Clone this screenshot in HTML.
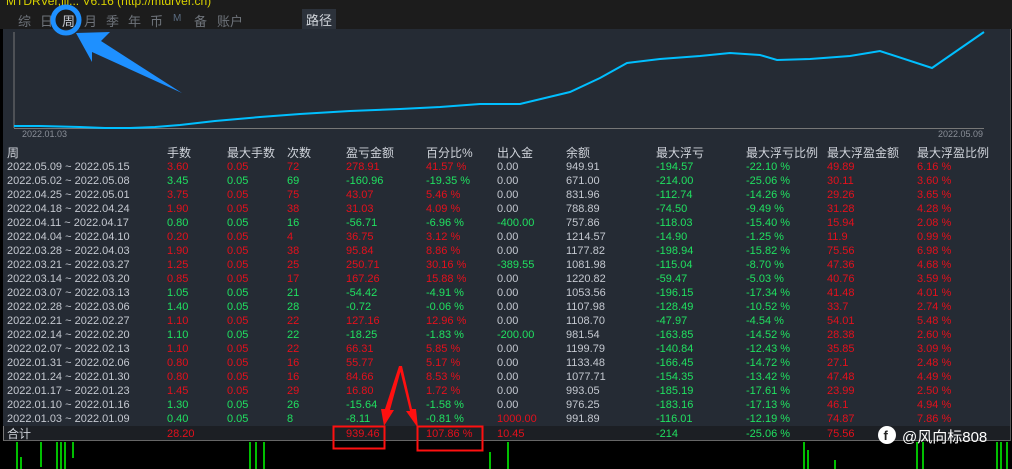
<!DOCTYPE html>
<html><head><meta charset="utf-8">
<style>
*{margin:0;padding:0;box-sizing:border-box}
body{width:1012px;height:469px;overflow:hidden;background:#000;position:relative;font-family:"Liberation Sans","Noto Sans CJK SC",sans-serif;font-size:11px}
.top{position:absolute;left:0;top:0;width:1012px;height:29px;background:#1c1c1c}
.ttl{position:absolute;left:6px;top:-6px;color:#d8d000;font-size:12px}
.tabs{position:absolute;left:18px;top:11px;color:#6e737a;font-size:13px;letter-spacing:0}
.tabs span{position:absolute;white-space:nowrap}
.chart{position:absolute;left:3px;top:29px;width:1007px;height:113px;background:#252b34}
.tbl{position:absolute;left:3px;top:142px;width:1007px;height:284px;background:#252b34}
.tot{position:absolute;left:3px;top:426px;width:1007px;height:15px;background:#1c1f24;border-left:1px solid #777;border-bottom:1px solid #666}
.r{position:absolute;left:0;width:1012px;height:14px;line-height:14px;white-space:nowrap}
.r span{position:absolute;top:0}
.h{color:#cfd3da;font-size:12px}
.c0{left:7px}.c1{left:167px}.c2{left:227px}.c3{left:287px}.c4{left:346px}.c5{left:426px}.c6{left:497px}.c7{left:566px}.c8{left:656px}.c9{left:746px}.c10{left:827px}.c11{left:917px}
.d{color:#c4c8d0}.R{color:#e4101c}.G{color:#20e060}.W{color:#c4c8d0}
</style></head><body>
<div class="top">
<div class="ttl">MTDRVer,ljl... V6.16 (http://mtdrver.cn)</div>
<div class="tabs">
<span style="left:0">综</span><span style="left:22px">日</span><span style="left:44px;color:#c8ccd4">周</span><span style="left:66px">月</span><span style="left:88px">季</span><span style="left:110px">年</span><span style="left:132px">币</span><span style="left:155px;font-size:10px;top:2px;color:#5a6b80">M</span><span style="left:176px">备</span><span style="left:199px">账户</span>
<span style="left:284px;top:-2px;background:#2c323b;color:#d0d4da;padding:1px 4px;font-size:13px">路径</span>
</div>
</div>
<div class="chart"></div>
<svg style="position:absolute;left:0;top:0" width="1012" height="160">
<line x1="14" y1="32" x2="14" y2="128" stroke="#777" stroke-width="1"/>
<line x1="14" y1="128.5" x2="984" y2="128.5" stroke="#777" stroke-width="1"/>
<polyline fill="none" stroke="#00bfff" stroke-width="2" points="14,126 40,126 80,127 105,128 130,128 155,127 180,125 215,121 260,117 300,114 350,111 400,109 440,107 480,104 520,104 570,92 600,78 627,63 660,59 700,56 720,54 730,53 760,55 777,60 810,59 850,56 880,51 932,68 984,32"/>
<text x="22" y="137" fill="#8a8f98" font-size="9" font-family="Liberation Sans">2022.01.03</text>
<text x="938" y="137" fill="#8a8f98" font-size="9" font-family="Liberation Sans">2022.05.09</text>
</svg>
<div class="tbl"></div>
<div class="tot"></div>
<div class="r h" style="top:146px"><span class="c0">周</span><span class="c1">手数</span><span class="c2">最大手数</span><span class="c3">次数</span><span class="c4">盈亏金额</span><span class="c5">百分比%</span><span class="c6">出入金</span><span class="c7">余额</span><span class="c8">最大浮亏</span><span class="c9">最大浮亏比例</span><span class="c10">最大浮盈金额</span><span class="c11">最大浮盈比例</span></div>
<div class="r" style="top:160px"><span class="c0 d">2022.05.09 ~ 2022.05.15</span><span class="c1 R">3.60</span><span class="c2 R">0.05</span><span class="c3 R">72</span><span class="c4 R">278.91</span><span class="c5 R">41.57 %</span><span class="c6 W">0.00</span><span class="c7 W">949.91</span><span class="c8 G">-194.57</span><span class="c9 G">-22.10 %</span><span class="c10 R">49.89</span><span class="c11 R">6.16 %</span></div>
<div class="r" style="top:174px"><span class="c0 d">2022.05.02 ~ 2022.05.08</span><span class="c1 G">3.45</span><span class="c2 G">0.05</span><span class="c3 G">69</span><span class="c4 G">-160.96</span><span class="c5 G">-19.35 %</span><span class="c6 W">0.00</span><span class="c7 W">671.00</span><span class="c8 G">-214.00</span><span class="c9 G">-25.06 %</span><span class="c10 R">30.11</span><span class="c11 R">3.60 %</span></div>
<div class="r" style="top:188px"><span class="c0 d">2022.04.25 ~ 2022.05.01</span><span class="c1 R">3.75</span><span class="c2 R">0.05</span><span class="c3 R">75</span><span class="c4 R">43.07</span><span class="c5 R">5.46 %</span><span class="c6 W">0.00</span><span class="c7 W">831.96</span><span class="c8 G">-112.74</span><span class="c9 G">-14.26 %</span><span class="c10 R">29.26</span><span class="c11 R">3.65 %</span></div>
<div class="r" style="top:202px"><span class="c0 d">2022.04.18 ~ 2022.04.24</span><span class="c1 R">1.90</span><span class="c2 R">0.05</span><span class="c3 R">38</span><span class="c4 R">31.03</span><span class="c5 R">4.09 %</span><span class="c6 W">0.00</span><span class="c7 W">788.89</span><span class="c8 G">-74.50</span><span class="c9 G">-9.49 %</span><span class="c10 R">31.28</span><span class="c11 R">4.28 %</span></div>
<div class="r" style="top:216px"><span class="c0 d">2022.04.11 ~ 2022.04.17</span><span class="c1 G">0.80</span><span class="c2 G">0.05</span><span class="c3 G">16</span><span class="c4 G">-56.71</span><span class="c5 G">-6.96 %</span><span class="c6 G">-400.00</span><span class="c7 W">757.86</span><span class="c8 G">-118.03</span><span class="c9 G">-15.40 %</span><span class="c10 R">15.94</span><span class="c11 R">2.08 %</span></div>
<div class="r" style="top:230px"><span class="c0 d">2022.04.04 ~ 2022.04.10</span><span class="c1 R">0.20</span><span class="c2 R">0.05</span><span class="c3 R">4</span><span class="c4 R">36.75</span><span class="c5 R">3.12 %</span><span class="c6 W">0.00</span><span class="c7 W">1214.57</span><span class="c8 G">-14.90</span><span class="c9 G">-1.25 %</span><span class="c10 R">11.9</span><span class="c11 R">0.99 %</span></div>
<div class="r" style="top:244px"><span class="c0 d">2022.03.28 ~ 2022.04.03</span><span class="c1 R">1.90</span><span class="c2 R">0.05</span><span class="c3 R">38</span><span class="c4 R">95.84</span><span class="c5 R">8.86 %</span><span class="c6 W">0.00</span><span class="c7 W">1177.82</span><span class="c8 G">-198.94</span><span class="c9 G">-15.82 %</span><span class="c10 R">75.56</span><span class="c11 R">6.98 %</span></div>
<div class="r" style="top:258px"><span class="c0 d">2022.03.21 ~ 2022.03.27</span><span class="c1 R">1.25</span><span class="c2 R">0.05</span><span class="c3 R">25</span><span class="c4 R">250.71</span><span class="c5 R">30.16 %</span><span class="c6 G">-389.55</span><span class="c7 W">1081.98</span><span class="c8 G">-115.04</span><span class="c9 G">-8.70 %</span><span class="c10 R">47.36</span><span class="c11 R">4.68 %</span></div>
<div class="r" style="top:272px"><span class="c0 d">2022.03.14 ~ 2022.03.20</span><span class="c1 R">0.85</span><span class="c2 R">0.05</span><span class="c3 R">17</span><span class="c4 R">167.26</span><span class="c5 R">15.88 %</span><span class="c6 W">0.00</span><span class="c7 W">1220.82</span><span class="c8 G">-59.47</span><span class="c9 G">-5.03 %</span><span class="c10 R">40.76</span><span class="c11 R">3.59 %</span></div>
<div class="r" style="top:286px"><span class="c0 d">2022.03.07 ~ 2022.03.13</span><span class="c1 G">1.05</span><span class="c2 G">0.05</span><span class="c3 G">21</span><span class="c4 G">-54.42</span><span class="c5 G">-4.91 %</span><span class="c6 W">0.00</span><span class="c7 W">1053.56</span><span class="c8 G">-196.15</span><span class="c9 G">-17.34 %</span><span class="c10 R">41.48</span><span class="c11 R">4.01 %</span></div>
<div class="r" style="top:300px"><span class="c0 d">2022.02.28 ~ 2022.03.06</span><span class="c1 G">1.40</span><span class="c2 G">0.05</span><span class="c3 G">28</span><span class="c4 G">-0.72</span><span class="c5 G">-0.06 %</span><span class="c6 W">0.00</span><span class="c7 W">1107.98</span><span class="c8 G">-128.49</span><span class="c9 G">-10.52 %</span><span class="c10 R">33.7</span><span class="c11 R">2.74 %</span></div>
<div class="r" style="top:314px"><span class="c0 d">2022.02.21 ~ 2022.02.27</span><span class="c1 R">1.10</span><span class="c2 R">0.05</span><span class="c3 R">22</span><span class="c4 R">127.16</span><span class="c5 R">12.96 %</span><span class="c6 W">0.00</span><span class="c7 W">1108.70</span><span class="c8 G">-47.97</span><span class="c9 G">-4.54 %</span><span class="c10 R">54.01</span><span class="c11 R">5.48 %</span></div>
<div class="r" style="top:328px"><span class="c0 d">2022.02.14 ~ 2022.02.20</span><span class="c1 G">1.10</span><span class="c2 G">0.05</span><span class="c3 G">22</span><span class="c4 G">-18.25</span><span class="c5 G">-1.83 %</span><span class="c6 G">-200.00</span><span class="c7 W">981.54</span><span class="c8 G">-163.85</span><span class="c9 G">-14.52 %</span><span class="c10 R">28.38</span><span class="c11 R">2.60 %</span></div>
<div class="r" style="top:342px"><span class="c0 d">2022.02.07 ~ 2022.02.13</span><span class="c1 R">1.10</span><span class="c2 R">0.05</span><span class="c3 R">22</span><span class="c4 R">66.31</span><span class="c5 R">5.85 %</span><span class="c6 W">0.00</span><span class="c7 W">1199.79</span><span class="c8 G">-140.84</span><span class="c9 G">-12.43 %</span><span class="c10 R">35.85</span><span class="c11 R">3.09 %</span></div>
<div class="r" style="top:356px"><span class="c0 d">2022.01.31 ~ 2022.02.06</span><span class="c1 R">0.80</span><span class="c2 R">0.05</span><span class="c3 R">16</span><span class="c4 R">55.77</span><span class="c5 R">5.17 %</span><span class="c6 W">0.00</span><span class="c7 W">1133.48</span><span class="c8 G">-166.45</span><span class="c9 G">-14.72 %</span><span class="c10 R">27.1</span><span class="c11 R">2.48 %</span></div>
<div class="r" style="top:370px"><span class="c0 d">2022.01.24 ~ 2022.01.30</span><span class="c1 R">0.80</span><span class="c2 R">0.05</span><span class="c3 R">16</span><span class="c4 R">84.66</span><span class="c5 R">8.53 %</span><span class="c6 W">0.00</span><span class="c7 W">1077.71</span><span class="c8 G">-154.35</span><span class="c9 G">-13.42 %</span><span class="c10 R">47.48</span><span class="c11 R">4.49 %</span></div>
<div class="r" style="top:384px"><span class="c0 d">2022.01.17 ~ 2022.01.23</span><span class="c1 R">1.45</span><span class="c2 R">0.05</span><span class="c3 R">29</span><span class="c4 R">16.80</span><span class="c5 R">1.72 %</span><span class="c6 W">0.00</span><span class="c7 W">993.05</span><span class="c8 G">-185.19</span><span class="c9 G">-17.61 %</span><span class="c10 R">23.99</span><span class="c11 R">2.50 %</span></div>
<div class="r" style="top:398px"><span class="c0 d">2022.01.10 ~ 2022.01.16</span><span class="c1 G">1.30</span><span class="c2 G">0.05</span><span class="c3 G">26</span><span class="c4 G">-15.64</span><span class="c5 G">-1.58 %</span><span class="c6 W">0.00</span><span class="c7 W">976.25</span><span class="c8 G">-183.16</span><span class="c9 G">-17.13 %</span><span class="c10 R">46.1</span><span class="c11 R">4.94 %</span></div>
<div class="r" style="top:412px"><span class="c0 d">2022.01.03 ~ 2022.01.09</span><span class="c1 G">0.40</span><span class="c2 G">0.05</span><span class="c3 G">8</span><span class="c4 G">-8.11</span><span class="c5 G">-0.81 %</span><span class="c6 R">1000.00</span><span class="c7 W">991.89</span><span class="c8 G">-116.01</span><span class="c9 G">-12.19 %</span><span class="c10 R">74.87</span><span class="c11 R">7.86 %</span></div>
<div class="r" style="top:427px"><span class="c0 h">合计</span><span class="c1 R">28.20</span><span class="c4 R">939.46</span><span class="c5 R">107.86 %</span><span class="c6 R">10.45</span><span class="c8 G">-214</span><span class="c9 G">-25.06 %</span><span class="c10 R">75.56</span></div>
<svg style="position:absolute;left:0;top:0" width="1012" height="469">
<g stroke="#00ff00" stroke-width="1.5">
<line x1="17" y1="442" x2="17" y2="469"/><line x1="21" y1="457" x2="21" y2="469"/><line x1="41" y1="442" x2="41" y2="467"/><line x1="57" y1="442" x2="57" y2="469"/><line x1="61" y1="442" x2="61" y2="469"/><line x1="65" y1="442" x2="65" y2="469"/><line x1="73" y1="442" x2="73" y2="458"/>
<line x1="250" y1="442" x2="250" y2="469"/><line x1="256" y1="442" x2="256" y2="469"/><line x1="264" y1="442" x2="264" y2="469"/><line x1="490" y1="452" x2="490" y2="469"/><line x1="508" y1="442" x2="508" y2="469"/>
<line x1="804" y1="442" x2="804" y2="469"/><line x1="808" y1="450" x2="808" y2="469"/><line x1="835" y1="460" x2="835" y2="469"/><line x1="917" y1="442" x2="917" y2="469"/><line x1="923" y1="442" x2="923" y2="469"/><line x1="997" y1="442" x2="997" y2="469"/><line x1="1001" y1="442" x2="1001" y2="469"/><line x1="1007" y1="442" x2="1007" y2="469"/>
</g>
<line x1="1010.5" y1="29" x2="1010.5" y2="441" stroke="#555"/>
<circle cx="66" cy="20" r="13" fill="none" stroke="#1e90ff" stroke-width="5"/>
<polygon points="76,33 110,32 101,41 182,93 92,52 92,62" fill="#1e90ff"/>
<g fill="#ff1010">
<polygon points="399,366 402,366 390,410 394,410 384,426 381,409 385,409"/>
<polygon points="399,366 402,366 412,409 416,409 418,428 406,411 410,411"/>
</g>
<rect x="333.5" y="426.5" width="51" height="22" fill="none" stroke="#ff1010" stroke-width="2"/>
<rect x="417.5" y="426.5" width="65" height="24" fill="none" stroke="#ff1010" stroke-width="2"/>
<circle cx="887" cy="435" r="9" fill="#fff"/>
<text x="883.5" y="440" font-family="Liberation Sans" font-weight="bold" font-size="13" fill="#222">f</text>
</svg>
<div style="position:absolute;left:902px;top:426px;color:#fff;font-size:15px;font-family:'Liberation Sans','Noto Sans CJK SC',sans-serif">@风向标808</div>
</body></html>
